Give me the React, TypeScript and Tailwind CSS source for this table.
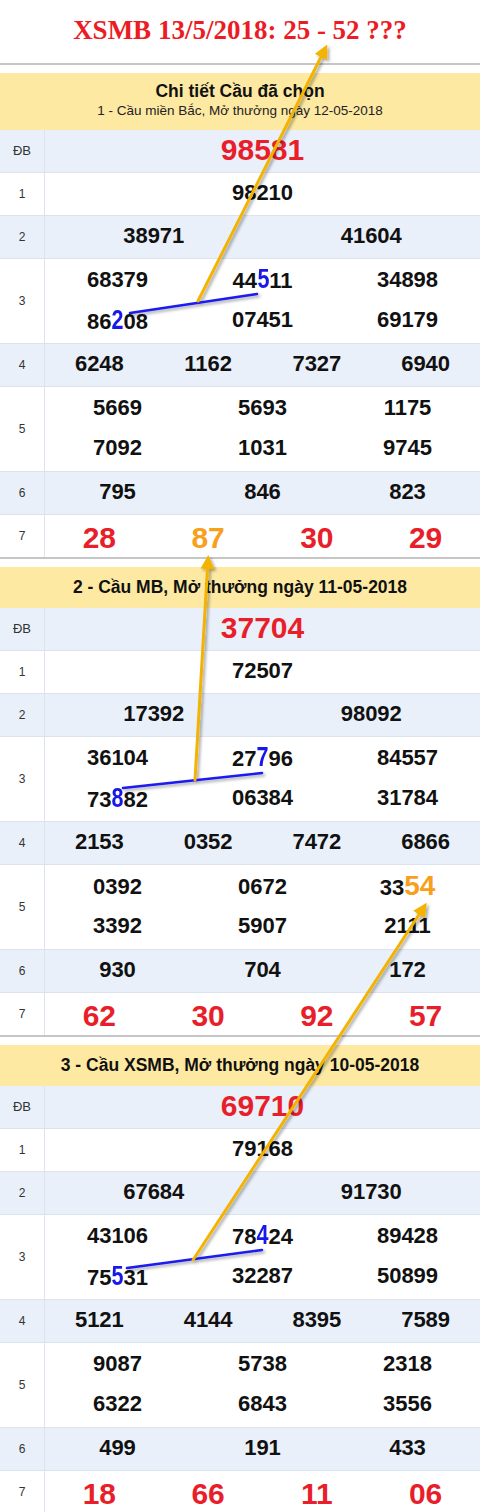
import React from "react";

type Draw = {
  head: React.ReactNode;
  headClass: string;
  db: string;
  g1: string;
  g2: string[];
  g3: string[][];
  g4: string[];
  g5: string[][];
  g6: string[];
  g7: string[];
};

const draws: Draw[] = [
  {
    head: (
      <>
        <div className="text-[17.5px] font-bold leading-tight text-[#111]">Chi tiết Cầu đã chọn</div>
        <div className="text-[13.5px] leading-tight text-[#222]">1 - Cầu miền Bắc, Mở thưởng ngày 12-05-2018</div>
      </>
    ),
    headClass: "h-[57px] pb-[2px]",
    db: "98581",
    g1: "98210",
    g2: ["38971", "41604"],
    g3: [
      ["68379", "44[5]11", "34898"],
      ["86[2]08", "07451", "69179"],
    ],
    g4: ["6248", "1162", "7327", "6940"],
    g5: [
      ["5669", "5693", "1175"],
      ["7092", "1031", "9745"],
    ],
    g6: ["795", "846", "823"],
    g7: ["28", "{87}", "30", "29"],
  },
  {
    head: <div className="text-[17.5px] font-bold text-[#111]">2 - Cầu MB, Mở thưởng ngày 11-05-2018</div>,
    headClass: "h-[41px]",
    db: "37704",
    g1: "72507",
    g2: ["17392", "98092"],
    g3: [
      ["36104", "27[7]96", "84557"],
      ["73[8]82", "06384", "31784"],
    ],
    g4: ["2153", "0352", "7472", "6866"],
    g5: [
      ["0392", "0672", "33{54}"],
      ["3392", "5907", "2111"],
    ],
    g6: ["930", "704", "172"],
    g7: ["62", "30", "92", "57"],
  },
  {
    head: <div className="text-[17.5px] font-bold text-[#111]">3 - Cầu XSMB, Mở thưởng ngày 10-05-2018</div>,
    headClass: "h-[41px]",
    db: "69710",
    g1: "79168",
    g2: ["67684", "91730"],
    g3: [
      ["43106", "78[4]24", "89428"],
      ["75[5]31", "32287", "50899"],
    ],
    g4: ["5121", "4144", "8395", "7589"],
    g5: [
      ["9087", "5738", "2318"],
      ["6322", "6843", "3556"],
    ],
    g6: ["499", "191", "433"],
    g7: ["18", "66", "11", "06"],
  },
];

// [x] = blue highlighted digit, {x} = orange highlight
function Num({ v, accent = "text-[#f8a01c]" }: { v: string; accent?: string }) {
  const parts = v.split(/(\[[^\]]+\]|\{[^}]+\})/).filter(Boolean);
  return (
    <span className="whitespace-nowrap">
      {parts.map((p, i) =>
        p.startsWith("[") ? (
          <span
            key={i}
            className="-mx-[1.5px] inline-block origin-center scale-x-[0.8] text-[27px] font-bold text-[#1818e8]"
          >
            {p.slice(1, -1)}
          </span>
        ) : p.startsWith("{") ? (
          <span key={i} className={accent}>{p.slice(1, -1)}</span>
        ) : (
          <span key={i}>{p}</span>
        ),
      )}
    </span>
  );
}

function Row({
  label,
  shade,
  tall,
  last,
  children,
}: {
  label: string;
  shade?: boolean;
  tall?: boolean;
  last?: boolean;
  children: React.ReactNode;
}) {
  return (
    <div
      className={[
        "flex",
        tall ? "h-[85px]" : last ? "h-[42px]" : "h-[43px]",
        last ? "" : "border-b border-[#dde3ec]",
        shade ? "bg-[#eaf0f9]" : "bg-white",
      ].join(" ")}
    >
      <div
        className={[
          "flex w-[45px] shrink-0 items-center justify-center border-r border-[#dde3ec] text-[#333]",
          label === "ĐB" ? "text-[13px]" : "text-[12px]",
        ].join(" ")}
      >
        {label}
      </div>
      <div className="flex-1 pb-[3px]">{children}</div>
    </div>
  );
}

function Line({ items, cols, accent }: { items: string[]; cols: string; accent?: string }) {
  return (
    <div className={`grid h-full ${cols}`}>
      {items.map((v, i) => (
        <div key={i} className="flex items-center justify-center">
          <Num v={v} accent={accent} />
        </div>
      ))}
    </div>
  );
}

function DrawTable({ d }: { d: Draw }) {
  const black = "text-[22px] font-bold text-[#111]";
  return (
    <div className="mt-2 border-b-2 border-[#c6c6c6]">
      <div className={`flex flex-col items-center justify-center bg-[#fee9a2] ${d.headClass}`}>{d.head}</div>
      <Row label="ĐB" shade>
        <div className="flex h-full items-center justify-center text-[30px] font-bold text-[#e81f2a]">{d.db}</div>
      </Row>
      <Row label="1">
        <div className={`flex h-full items-center justify-center ${black}`}>{d.g1}</div>
      </Row>
      <Row label="2" shade>
        <div className={`h-full ${black}`}>
          <Line items={d.g2} cols="grid-cols-2" />
        </div>
      </Row>
      <Row label="3" tall>
        <div className={`grid h-full grid-rows-2 ${black}`}>
          {d.g3.map((r, i) => (
            <Line key={i} items={r} cols="grid-cols-3" />
          ))}
        </div>
      </Row>
      <Row label="4" shade>
        <div className={`h-full ${black}`}>
          <Line items={d.g4} cols="grid-cols-4" />
        </div>
      </Row>
      <Row label="5" tall>
        <div className={`grid h-full grid-rows-2 ${black}`}>
          {d.g5.map((r, i) => (
            <Line key={i} items={r} cols="grid-cols-3" accent="text-[28px] text-[#f8a01c]" />
          ))}
        </div>
      </Row>
      <Row label="6" shade>
        <div className={`h-full ${black}`}>
          <Line items={d.g6} cols="grid-cols-3" />
        </div>
      </Row>
      <Row label="7" last>
        <div className="h-full text-[30px] font-bold text-[#e81f2a]">
          <Line items={d.g7} cols="grid-cols-4" />
        </div>
      </Row>
    </div>
  );
}

function Arrows() {
  const gold = "#f3b300";
  const blue = "#1a1af0";
  return (
    <svg className="pointer-events-none absolute left-0 top-0" width={480} height={1512} viewBox="0 0 480 1512">
      <defs>
        <filter id="shadow" x="-20%" y="-20%" width="140%" height="140%">
          <feDropShadow dx="2" dy="2" stdDeviation="1.5" floodColor="#000" floodOpacity="0.35" />
        </filter>
        <marker id="head" markerUnits="userSpaceOnUse" markerWidth="14" markerHeight="14" refX="9" refY="7" orient="auto">
          <path d="M0,0 L14,7 L0,14 z" fill={gold} />
        </marker>
      </defs>
      <g filter="url(#shadow)" strokeLinecap="round">
        <line x1={130} y1={313} x2={257} y2={294} stroke={blue} strokeWidth={2.5} />
        <line x1={198} y1={301} x2={325} y2={49} stroke={gold} strokeWidth={3} markerEnd="url(#head)" />

        <line x1={123} y1={788} x2={262} y2={773} stroke={blue} strokeWidth={2.5} />
        <line x1={195} y1={780} x2={208} y2={560} stroke={gold} strokeWidth={3} markerEnd="url(#head)" />

        <line x1={127} y1={1268} x2={262} y2={1250} stroke={blue} strokeWidth={2.5} />
        <line x1={193} y1={1260} x2={424} y2={907} stroke={gold} strokeWidth={3} markerEnd="url(#head)" />
      </g>
    </svg>
  );
}

export default function App() {
  return (
    <div className="relative h-[1512px] w-[480px] overflow-hidden bg-white font-['Liberation_Sans',Arial,sans-serif]">
      <div className="flex h-[65px] items-center justify-center border-b-2 border-[#c6c6c6] pb-[2px]">
        <h1 className="font-['Liberation_Serif','Times_New_Roman',serif] text-[27px] font-bold text-[#ec1c24]">
          XSMB 13/5/2018: 25 - 52 ???
        </h1>
      </div>
      {draws.map((d, i) => (
        <DrawTable key={i} d={d} />
      ))}
      <Arrows />
    </div>
  );
}
